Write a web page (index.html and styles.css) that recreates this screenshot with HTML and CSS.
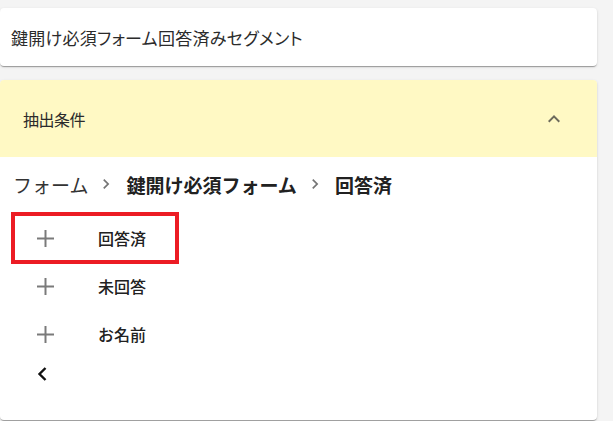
FILE: index.html
```html
<!DOCTYPE html>
<html lang="ja">
<head>
  <meta charset="UTF-8">
  <meta name="viewport" content="width=device-width, initial-scale=1.0">
  <title>セグメント</title>
  <link rel="stylesheet" href="styles.css">
</head>
<body>
  <div class="card title-card">
    <span class="title">鍵開け必須フォーム回答済みセグメント</span>
  </div>

  <div class="card panel">
    <div class="panel-header">
      <span class="panel-title">抽出条件</span>
      <svg class="expand" viewBox="0 0 24 24" width="24" height="24">
        <path d="M12 8l-6 6 1.41 1.41L12 10.83l4.59 4.58L18 14z" fill="currentColor"/>
      </svg>
    </div>

    <div class="panel-body">
      <div class="crumbs">
        <span class="crumb">フォーム</span>
        <svg class="sep" viewBox="0 0 24 24" width="20" height="20">
          <path d="M10 6 8.59 7.41 13.17 12l-4.58 4.59L10 18l6-6z" fill="currentColor"/>
        </svg>
        <span class="crumb strong">鍵開け必須フォーム</span>
        <svg class="sep" viewBox="0 0 24 24" width="20" height="20">
          <path d="M10 6 8.59 7.41 13.17 12l-4.58 4.59L10 18l6-6z" fill="currentColor"/>
        </svg>
        <span class="crumb strong">回答済</span>
      </div>

      <ul class="items">
        <li class="item marked">
          <svg class="plus" viewBox="0 0 17 17" width="17" height="17">
            <path d="M7.5 0h2v17h-2zM0 7.5h17v2H0z" fill="currentColor"/>
          </svg>
          <span class="label">回答済</span>
        </li>
        <li class="item">
          <svg class="plus" viewBox="0 0 17 17" width="17" height="17">
            <path d="M7.5 0h2v17h-2zM0 7.5h17v2H0z" fill="currentColor"/>
          </svg>
          <span class="label">未回答</span>
        </li>
        <li class="item">
          <svg class="plus" viewBox="0 0 17 17" width="17" height="17">
            <path d="M7.5 0h2v17h-2zM0 7.5h17v2H0z" fill="currentColor"/>
          </svg>
          <span class="label">お名前</span>
        </li>
      </ul>

      <div class="back">
        <svg viewBox="0 0 10 14" width="10" height="14">
          <path d="M8.5 1 2.5 7l6 6" fill="none" stroke="currentColor" stroke-width="2.4"/>
        </svg>
      </div>
    </div>
  </div>
</body>
</html>
```

FILE: styles.css
```css
* {
  margin: 0;
  padding: 0;
  box-sizing: border-box;
}

body {
  font-family: "Noto Sans CJK JP", "Noto Sans", sans-serif;
  background-color: #f4f4f4;
  color: #212121;
  padding: 8px 16px 0 0;
  height: 421px;
  overflow: hidden;
}

/* Cards */
.card {
  background-color: #fff;
  border-radius: 4px;
  box-shadow: 0 2px 1px -1px rgba(0, 0, 0, 0.2), 0 1px 1px 0 rgba(0, 0, 0, 0.14), 0 1px 3px 0 rgba(0, 0, 0, 0.12);
}

.title-card {
  height: 58px;
  display: flex;
  align-items: center;
  padding-left: 11px;
}

.title {
  font-size: 17px;
  font-feature-settings: "palt";
  letter-spacing: 0.3px;
  color: #2b2b2b;
}

.panel {
  margin-top: 14px;
  height: 340px;
  overflow: hidden;
}

/* Cabeçalho amarelo */
.panel-header {
  height: 77px;
  background-color: #fff9c4;
  display: flex;
  align-items: center;
  justify-content: space-between;
  padding: 0 31px 0 23px;
}

.panel-title {
  font-size: 16px;
  letter-spacing: -0.5px;
  color: #2b2b2b;
}

.expand {
  color: #6d6b5c;
}

/* Conteúdo */
.panel-body {
  padding-top: 14px;
}

.crumbs {
  display: flex;
  align-items: center;
  height: 26px;
  padding-left: 13px;
  font-size: 19px;
}

.crumb {
  color: #333;
}

.crumb.strong {
  font-weight: 700;
  color: #212121;
}

.sep {
  color: #757575;
  margin: 0 10px 0 8px;
}

.items {
  list-style: none;
  margin-top: 17px;
}

.item {
  display: flex;
  align-items: center;
  height: 48px;
  width: 164px;
  margin-left: 13px;
  padding-left: 24px;
}

.item.marked {
  outline: 4px solid #ec1c24;
  outline-offset: -2px;
}

.plus {
  color: #7a7a7a;
  flex-shrink: 0;
}

.label {
  margin-left: 44px;
  font-size: 16px;
  font-weight: 500;
  color: #212121;
}

.back {
  margin-top: 4px;
  padding-left: 37px;
  height: 24px;
  display: flex;
  align-items: center;
  color: #111;
}
```
